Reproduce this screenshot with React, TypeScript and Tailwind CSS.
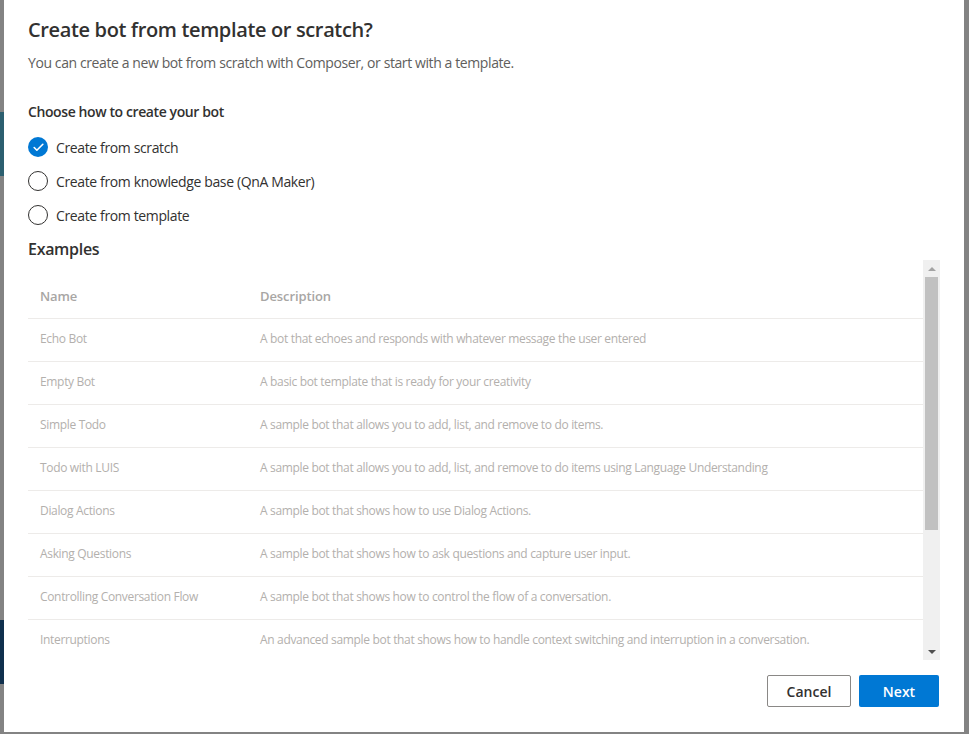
import { Check } from "lucide-react";

type Example = {
  name: string;
  description: string;
};

const examples: Example[] = [
  {
    name: "Echo Bot",
    description: "A bot that echoes and responds with whatever message the user entered",
  },
  { name: "Empty Bot", description: "A basic bot template that is ready for your creativity" },
  {
    name: "Simple Todo",
    description: "A sample bot that allows you to add, list, and remove to do items.",
  },
  {
    name: "Todo with LUIS",
    description:
      "A sample bot that allows you to add, list, and remove to do items using Language Understanding",
  },
  { name: "Dialog Actions", description: "A sample bot that shows how to use Dialog Actions." },
  {
    name: "Asking Questions",
    description: "A sample bot that shows how to ask questions and capture user input.",
  },
  {
    name: "Controlling Conversation Flow",
    description: "A sample bot that shows how to control the flow of a conversation.",
  },
  {
    name: "Interruptions",
    description:
      "An advanced sample bot that shows how to handle context switching and interruption in a conversation.",
  },
];

const options = [
  { label: "Create from scratch", checked: true },
  { label: "Create from knowledge base (QnA Maker)", checked: false },
  { label: "Create from template", checked: false },
];

function Radio({ checked }: { checked: boolean }) {
  if (checked) {
    return (
      <span className="flex h-[20px] w-[20px] items-center justify-center rounded-full bg-[#0078d4]">
        <Check size={13} strokeWidth={3} className="text-white" />
      </span>
    );
  }
  return <span className="h-[20px] w-[20px] rounded-full border border-[#323130]" />;
}

function Scrollbar() {
  return (
    <div className="flex w-[17px] flex-col bg-[#f0f0f0]">
      <div className="flex h-[17px] items-center justify-center">
        <span className="h-0 w-0 border-x-[4px] border-b-[4px] border-x-transparent border-b-[#a3a3a3]" />
      </div>
      <div className="mx-[2px] h-[253px] bg-[#c1c1c1]" />
      <div className="flex-1" />
      <div className="flex h-[17px] items-center justify-center">
        <span className="h-0 w-0 border-x-[4px] border-t-[4px] border-x-transparent border-t-[#505050]" />
      </div>
    </div>
  );
}

export default function App() {
  return (
    <div
      className="flex h-[734px] w-[969px] overflow-hidden bg-[#838383] text-[#323130]"
      style={{ fontFamily: '"Segoe UI", "Open Sans", sans-serif' }}
    >
      <div className="flex w-[4px] flex-col">
        <div className="h-[112px]" />
        <div className="h-[64px] bg-[#2c5f6f]" />
        <div className="h-[444px]" />
        <div className="h-[64px] bg-[#10304d]" />
      </div>

      <div className="flex h-[732px] w-[960px] flex-col bg-white pl-[24px] pr-[24px]">
        <h1 className="pt-[16px] text-[20px] font-semibold leading-[28px] tracking-[-0.36px]">
          Create bot from template or scratch?
        </h1>
        <p className="mt-[9px] text-[14px] leading-[20px] tracking-[-0.4px] text-[#605e5c]">
          You can create a new bot from scratch with Composer, or start with a template.
        </p>

        <div className="mt-[29px] text-[14px] font-semibold leading-[20px] tracking-[-0.4px]">
          Choose how to create your bot
        </div>
        <div className="mt-[8px] flex flex-col">
          {options.map((o) => (
            <label
              key={o.label}
              className="flex h-[34px] items-center gap-[8px] text-[14px] tracking-[-0.37px]"
            >
              <Radio checked={o.checked} />
              <span>{o.label}</span>
            </label>
          ))}
        </div>

        <div className="mt-[6px] text-[16px] font-semibold leading-[22px] tracking-[-0.3px]">
          Examples
        </div>

        <div className="flex h-[400px]">
          <div className="flex-1 overflow-hidden pt-[16px]">
            <div className="flex h-[42px] items-center text-[13px] font-semibold tracking-[-0.1px] text-[#a8a6a4]">
              <div className="w-[232px] pl-[12px]">Name</div>
              <div>Description</div>
            </div>
            {examples.map((ex) => (
              <div
                key={ex.name}
                className="flex h-[43px] items-center border-t border-[#edebe9] pb-[2px] text-[12px] tracking-[-0.33px] text-[#b3b0ad]"
              >
                <div className="w-[232px] pl-[12px]">{ex.name}</div>
                <div className="whitespace-nowrap">{ex.description}</div>
              </div>
            ))}
          </div>
          <Scrollbar />
        </div>

        <div className="mt-[15px] flex justify-end gap-[8px] pr-[1px]">
          <button className="h-[32px] w-[84px] rounded-[2px] border border-[#8a8886] text-[14px] font-semibold">
            Cancel
          </button>
          <button className="h-[32px] w-[80px] rounded-[2px] bg-[#0078d4] text-[14px] font-semibold text-white">
            Next
          </button>
        </div>
      </div>
    </div>
  );
}
